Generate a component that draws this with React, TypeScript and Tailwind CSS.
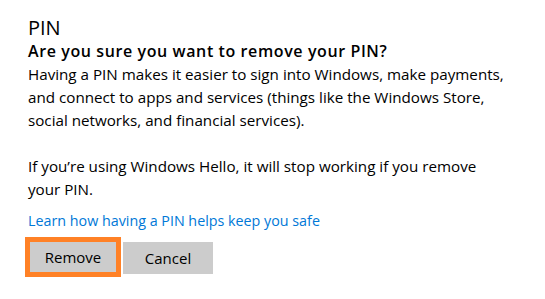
import React from "react";

export default function App() {
  return (
    <div
      className="w-[545px] h-[299px] bg-white text-black pl-[28px] pt-[15px]"
      style={{ fontFamily: '"Open Sans", "Noto Sans", sans-serif' }}
    >
      <div className="text-[20px] leading-[26px]">PIN</div>
      <div className="text-[16px] leading-[23px] font-semibold mt-[-1px] tracking-[0.6px]">
        Are you sure you want to remove your PIN?
      </div>
      <p className="text-[15.2px] leading-[23px]">
        Having a PIN makes it easier to sign into Windows, make payments,
        <br />
        and connect to apps and services (things like the Windows Store,
        <br />
        social networks, and financial services).
      </p>
      <p className="text-[15.2px] leading-[23px] mt-[23px]">
        If you’re using Windows Hello, it will stop working if you remove
        <br />
        your PIN.
      </p>
      <div className="text-[14.3px] leading-[23px] mt-[8px] text-[#0078d7]">
        Learn how having a PIN helps keep you safe
      </div>
      <div className="flex items-start mt-[5px] ml-[-3px]">
        <div className="border-[5px] border-[#ff8126] w-[96px] h-[40px] bg-[#cccccc] flex items-center justify-center text-[15px]">
          Remove
        </div>
        <div className="ml-[2px] mt-[5px] w-[90px] h-[32px] bg-[#cccccc] flex items-center justify-center text-[15px]">
          Cancel
        </div>
      </div>
    </div>
  );
}
